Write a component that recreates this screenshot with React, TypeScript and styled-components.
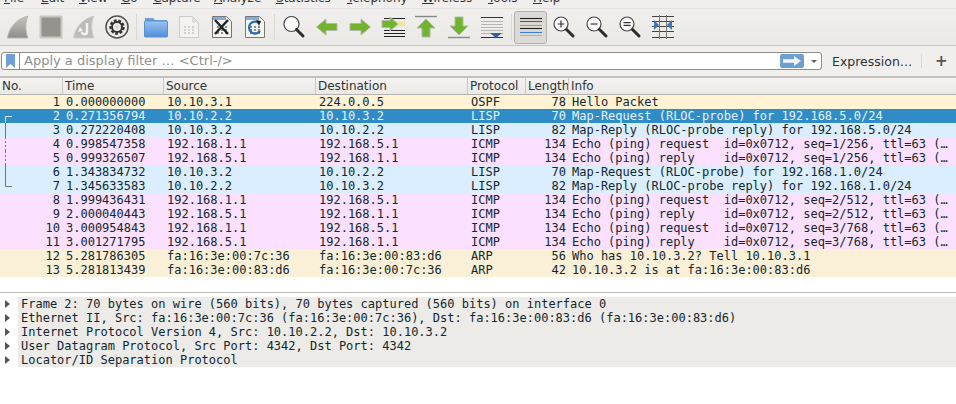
import React from "react";
import styled, { createGlobalStyle } from "styled-components";

const Global = createGlobalStyle`
  html, body { margin: 0; padding: 0; background: #fff; }
  body { width: 956px; height: 404px; overflow: hidden; font-family: "DejaVu Sans", sans-serif; }
`;
const Page = styled.div`display:flex;flex-direction:column;width:956px;height:404px;overflow:hidden;background:#fff;`;
const MenuBar = styled.div`display:flex;height:8px;background:#f1efed;overflow:hidden;padding-left:4px;border-bottom:0;`;
const MenuItem = styled.div<{ $w: number }>`width:${p => p.$w}px;margin-top:-10px;line-height:17px;font-size:12px;color:#2e3436;white-space:pre;
  u{text-decoration:underline;text-underline-offset:1px;}`;
const Toolbar = styled.div`display:flex;align-items:center;height:38px;padding-left:1px;background:linear-gradient(#f1efed,#ebe9e6);border-top:1px solid #e4e2df;border-bottom:1px solid #c9c6c1;box-sizing:border-box;`;
const ToolBtn = styled.div<{ $on?: boolean }>`width:33px;height:33px;display:flex;align-items:center;justify-content:center;flex:none;box-sizing:border-box;
  ${p => p.$on ? "background:#dcdad6;border:1px solid #b4b1ac;border-radius:3px;margin:0;" : ""}`;
const ToolSep = styled.div`width:6px;flex:none;display:flex;justify-content:center;&::after{content:"";width:1px;height:26px;background:#dcd9d5;}`;
const FilterBar = styled.div`display:flex;align-items:center;height:32px;box-sizing:border-box;padding:0 8px 0 1px;background:#f1efed;border-bottom:2px solid #c4c1bc;`;
const FilterBox = styled.div`display:flex;align-items:center;width:821px;height:18px;box-sizing:border-box;background:#fff;border:1px solid #8f8b86;border-radius:3px;`;
const Bookmark = styled.div`width:18px;height:16px;flex:none;display:flex;align-items:center;justify-content:center;border-right:1px solid #8f8b86;box-sizing:border-box;`;
const FilterInput = styled.div`flex:1;padding-left:4px;font-size:13px;line-height:16px;color:#8c9092;white-space:pre;`;
const ApplyBtn = styled.div`width:24px;height:14px;border-radius:2px;background:#6e9fd2;display:flex;align-items:center;justify-content:center;flex:none;`;
const Caret = styled.div`width:0;height:0;margin:0 4px 0 7px;border-left:3px solid transparent;border-right:3px solid transparent;border-top:3px solid #5c5e5e;flex:none;`;
const ExprBtn = styled.div`margin-left:10px;width:88px;font-size:12.5px;color:#2e3436;white-space:pre;`;
const ExprSep = styled.div`width:1px;height:14px;background:#dcd9d5;margin-left:1px;`;
const PlusBtn = styled.div`margin-left:13px;font-size:15px;font-weight:bold;color:#555;line-height:16px;`;
const Cols = "63px 101px 152px 152px 58px 43px 1fr";
const Header = styled.div`display:grid;grid-template-columns:${Cols};height:17px;box-sizing:border-box;background:linear-gradient(#f5f3f1,#ebe9e6);border-bottom:1px solid #b5b2ad;`;
const HeadCell = styled.div`font-size:12px;line-height:16px;color:#2e3436;padding-left:2px;border-right:1px solid #cdcac5;white-space:pre;overflow:hidden;box-sizing:border-box;&:last-child{border-right:0;}`;
const Rows = styled.div`display:flex;flex-direction:column;height:198px;flex:none;`;
const Row = styled.div<{ $bg: string; $sel?: boolean }>`display:grid;grid-template-columns:${Cols};height:14px;flex:none;background:${p => p.$bg};color:${p => p.$sel ? "#e6f2fb" : "#12272e"};
  font-family:"DejaVu Sans Mono",monospace;font-size:12px;line-height:14px;`;
const Cell = styled.div<{ $right?: boolean }>`padding:0 ${p => p.$right ? "3px" : "0"} 0 ${p => p.$right ? "0" : "3px"};text-align:${p => p.$right ? "right" : "left"};white-space:pre;overflow:hidden;position:relative;`;
const Mark = styled.svg`position:absolute;left:0;top:0;`;
const Splitter = styled.div`height:5px;flex:none;background:#fff;border-top:1px solid #bdbab6;border-bottom:0;margin-top:-1px;box-sizing:content-box;`;
const Details = styled.div`display:flex;flex-direction:column;margin-top:-1px;`;
const DetailRow = styled.div`display:flex;height:14px;font-family:"DejaVu Sans Mono",monospace;font-size:12px;line-height:14px;color:#12272e;white-space:pre;`;
const Arrow = styled.div`width:18px;flex:none;display:flex;align-items:center;padding-left:5px;box-sizing:border-box;
  &::before{content:"";border-left:5px solid #555;border-top:4px solid transparent;border-bottom:4px solid transparent;}`;
const DetailText = styled.div`flex:1;background:#ecebe8;padding-left:3px;`;

const g = "#3f3f3f";
const Fin = ({ c = "#8f8c87" }: { c?: string }) => (
  <svg width="24" height="26" viewBox="0 0 24 26"><defs><linearGradient id="fin" x1="0" x2="0" y1="0" y2="1"><stop offset="0" stopColor="#c8c6c2" /><stop offset="1" stopColor={c} /></linearGradient></defs>
    <path d="M1.5 24C3 14 10 5 22 2c-3 6-3 15 0 22z" fill="url(#fin)" stroke="#b8b6b1" /></svg>
);
const Stop = () => <svg width="24" height="24" viewBox="0 0 24 24"><rect x="1.5" y="1.5" width="21" height="21" fill="#96938d" stroke="#c9c7c3" strokeWidth="2" /></svg>;
const Restart = () => (
  <svg width="24" height="26" viewBox="0 0 24 26"><path d="M1.5 24C3 14 10 5 22 2c-3 6-3 15 0 22z" fill="#bdbbb6" stroke="#cfcdc9" />
    <path d="M15 9v9c0 3-5 3-5 0" fill="none" stroke="#f2f1ef" strokeWidth="2.4" /><path d="M8 13l-2 5 5-1z" fill="#f2f1ef" /></svg>
);
const Gear = () => (
  <svg width="24" height="24" viewBox="0 0 24 24"><circle cx="12" cy="12" r="11" fill="#f2f1ef" stroke="#555" strokeWidth="1.6" /><circle cx="12" cy="12" r="6.6" fill="none" stroke="#333" strokeWidth="2.2" strokeDasharray="3 1.6" /><circle cx="12" cy="12" r="5" fill="none" stroke="#333" strokeWidth="2" /><circle cx="12" cy="12" r="2.4" fill="#ddd" /></svg>
);
const Folder = () => (
  <svg width="24" height="22" viewBox="0 0 24 22"><defs><linearGradient id="fo" x1="0" x2="0" y1="0" y2="1"><stop offset="0" stopColor="#9cc3ef" /><stop offset="1" stopColor="#4d8fdc" /></linearGradient></defs>
    <path d="M1 2h8l2 2h12v3H1z" fill="#6d9fd8" /><rect x="0.5" y="5" width="23" height="16" rx="1" fill="url(#fo)" stroke="#5a8fca" /></svg>
);
const Doc = ({ dim }: { dim?: boolean }) => (
  <>{[0, 1, 2].map(r => <path key={r} d={`M6 ${12 + r * 3}h2M10 ${12 + r * 3}h2M14 ${12 + r * 3}h2`} stroke={dim ? "#c7c5c0" : "#66707a"} strokeWidth="1.4" />)}</>
);
const FileIcon = () => (
  <svg width="22" height="24" viewBox="0 0 22 24"><path d="M1.5 1.5h13l6 6v15h-19z" fill="#f3f2ef" stroke="#cdcbc6" /><path d="M14 1.5v6h6z" fill="#dedcd8" /><Doc dim /></svg>
);
const CloseFile = () => (
  <svg width="22" height="24" viewBox="0 0 22 24"><path d="M1.5 1.5h14l5 5v16h-19z" fill="#f4f4f0" stroke="#777" /><path d="M2 2h13v3H2z" fill="#7fb0e0" /><Doc /><path d="M4 5l13 14M17 5L4 19" stroke="#222" strokeWidth="2.4" /></svg>
);
const Reload = () => (
  <svg width="22" height="24" viewBox="0 0 22 24"><path d="M1.5 1.5h14l5 5v16h-19z" fill="#f4f4f0" stroke="#777" /><path d="M2 2h13v3H2z" fill="#7fb0e0" /><Doc /><path d="M15 8a6 6 0 1 0 1 8" fill="none" stroke="#2b6cb0" strokeWidth="2.2" /><path d="M12 5l5 1-2 5z" fill="#222" /></svg>
);
const Lens = ({ sign, big }: { sign?: string; big?: boolean }) => (
  <svg width="24" height="24" viewBox="0 0 24 24">
    <circle cx={big ? 9.5 : 9} cy={big ? 9 : 9} r={big ? 7.5 : 7} fill="#fff" stroke="#444" strokeWidth="1.2" />
    <path d="M14.5 14.5L21 21" stroke="#2c2c2c" strokeWidth="3" strokeLinecap="round" />
    {sign === "+" && <path d="M5.5 9h7M9 5.5v7" stroke="#333" strokeWidth="1.2" />}
    {sign === "-" && <path d="M5.5 9h7" stroke="#333" strokeWidth="1.2" />}
    {sign === "=" && <path d="M5.5 7.7h7M5.5 10.3h7" stroke="#333" strokeWidth="1.2" />}
  </svg>
);
const green = "#6fb52c", gs = "#b5b8ae";
const ArrowLeft = () => <svg width="24" height="20" viewBox="0 0 24 20"><path d="M1.5 10L11 2v4.5h11v7H11V18z" fill={green} stroke={gs} /></svg>;
const ArrowRight = () => <svg width="24" height="20" viewBox="0 0 24 20"><path d="M22.5 10L13 2v4.5H2v7h11V18z" fill={green} stroke={gs} /></svg>;
const GoTo = () => (
  <svg width="24" height="24" viewBox="0 0 24 24"><path d="M3 3.5h21M3 15.5h21M3 18.5h21M3 21.5h21" stroke="#222" strokeWidth="1.1" /><path d="M13 6.5h11v5H13z" fill="#e8e8a0" /><path d="M17 9L9 2v3.5H1v7h8V16z" fill={green} stroke={gs} /></svg>
);
const GoTop = () => (
  <svg width="22" height="24" viewBox="0 0 22 24"><path d="M0 1.5h22" stroke="#888" strokeWidth="1.4" /><path d="M11 4L2 13h5v9h8v-9h5z" fill={green} stroke={gs} /></svg>
);
const GoBottom = () => (
  <svg width="22" height="24" viewBox="0 0 22 24"><path d="M0 22.5h22" stroke="#888" strokeWidth="1.4" /><path d="M11 20L2 11h5V2h8v9h5z" fill={green} stroke={gs} /></svg>
);
const AutoScroll = () => (
  <svg width="24" height="24" viewBox="0 0 24 24"><path d="M1 2.5h22M1 22.5h22" stroke="#333" strokeWidth="1.1" /><path d="M1 6.5h22M1 9.5h22M1 12.5h22M1 15.5h22M1 18.5h22" stroke="#b5b5b2" strokeWidth="1" /><path d="M10 18h12l-6 5z" fill="#2f5fa8" /></svg>
);
const Colorize = () => (
  <svg width="24" height="24" viewBox="0 0 24 24"><path d="M1 3.5h22" stroke="#222" strokeWidth="1.1" /><path d="M1 6.5h22" stroke="#c4312c" strokeWidth="1.1" /><path d="M1 10.5h22" stroke="#7cc041" strokeWidth="1.1" /><path d="M1 13.5h22" stroke="#222" strokeWidth="1.1" /><path d="M1 17.5h22" stroke="#3b7fd0" strokeWidth="1.1" /><path d="M1 20.5h22" stroke="#d9b43a" strokeWidth="1.1" /></svg>
);
const Resize = () => (
  <svg width="22" height="24" viewBox="0 0 22 24"><path d="M0 1.5h22M0 6.5h22M0 11.5h22M0 16.5h22M0 22.5h22" stroke="#444" strokeWidth="1" /><path d="M7.5 0v24M14.5 0v24" stroke="#777" strokeWidth="1" /><path d="M2 5l5 5-5 5zM20 5l-5 5 5 5z" fill="#3f78b8" /></svg>
);

const tools: (React.ReactNode | null)[] = [
  <Fin />, <Stop />, <Restart />, <Gear />, null,
  <Folder />, <FileIcon />, <CloseFile />, <Reload />, null,
  <Lens big />, <ArrowLeft />, <ArrowRight />, <GoTo />, <GoTop />, <GoBottom />, <AutoScroll />, null,
  "on", <Lens sign="+" />, <Lens sign="-" />, <Lens sign="=" />, <Resize />,
];

const menu: [string, string, number][] = [
  ["F", "ile", 37], ["E", "dit", 38], ["V", "iew", 42], ["G", "o", 32], ["C", "apture", 61], ["A", "nalyze", 62],
  ["S", "tatistics", 71], ["T", "elephony", 75], ["W", "ireless", 66], ["T", "ools", 45], ["H", "elp", 40],
];

const C = { o: "#fff3d6", l: "#daeeff", i: "#fce0ff", a: "#faf0d7", s: "#308cc6" };
const rows: [string, string, string, string, string, string, string, string][] = [
  ["1", "0.000000000", "10.10.3.1", "224.0.0.5", "OSPF", "78", "Hello Packet", C.o],
  ["2", "0.271356794", "10.10.2.2", "10.10.3.2", "LISP", "70", "Map-Request (RLOC-probe) for 192.168.5.0/24", C.s],
  ["3", "0.272220408", "10.10.3.2", "10.10.2.2", "LISP", "82", "Map-Reply (RLOC-probe reply) for 192.168.5.0/24", C.l],
  ["4", "0.998547358", "192.168.1.1", "192.168.5.1", "ICMP", "134", "Echo (ping) request  id=0x0712, seq=1/256, ttl=63 (…", C.i],
  ["5", "0.999326507", "192.168.5.1", "192.168.1.1", "ICMP", "134", "Echo (ping) reply    id=0x0712, seq=1/256, ttl=63 (…", C.i],
  ["6", "1.343834732", "10.10.3.2", "10.10.2.2", "LISP", "70", "Map-Request (RLOC-probe) for 192.168.1.0/24", C.l],
  ["7", "1.345633583", "10.10.2.2", "10.10.3.2", "LISP", "82", "Map-Reply (RLOC-probe reply) for 192.168.1.0/24", C.l],
  ["8", "1.999436431", "192.168.1.1", "192.168.5.1", "ICMP", "134", "Echo (ping) request  id=0x0712, seq=2/512, ttl=63 (…", C.i],
  ["9", "2.000040443", "192.168.5.1", "192.168.1.1", "ICMP", "134", "Echo (ping) reply    id=0x0712, seq=2/512, ttl=63 (…", C.i],
  ["10", "3.000954843", "192.168.1.1", "192.168.5.1", "ICMP", "134", "Echo (ping) request  id=0x0712, seq=3/768, ttl=63 (…", C.i],
  ["11", "3.001271795", "192.168.5.1", "192.168.1.1", "ICMP", "134", "Echo (ping) reply    id=0x0712, seq=3/768, ttl=63 (…", C.i],
  ["12", "5.281786305", "fa:16:3e:00:7c:36", "fa:16:3e:00:83:d6", "ARP", "56", "Who has 10.10.3.2? Tell 10.10.3.1", C.a],
  ["13", "5.281813439", "fa:16:3e:00:83:d6", "fa:16:3e:00:7c:36", "ARP", "42", "10.10.3.2 is at fa:16:3e:00:83:d6", C.a],
];

const marks: Record<string, React.ReactNode> = {
  "2": <path d="M12 7.5H5.5V14" fill="none" stroke="#d6e8f5" />,
  "3": <path d="M5.5 0V14" stroke="#6a7780" />,
  "4": <path d="M5.5 0V14" stroke="#8a6a90" strokeDasharray="2 2" />,
  "5": <path d="M5.5 0V14" stroke="#8a6a90" strokeDasharray="2 2" />,
  "6": <path d="M5.5 0V14" stroke="#6a7780" />,
  "7": <path d="M5.5 0V7.5H12" fill="none" stroke="#6a7780" />,
};

const details = [
  "Frame 2: 70 bytes on wire (560 bits), 70 bytes captured (560 bits) on interface 0",
  "Ethernet II, Src: fa:16:3e:00:7c:36 (fa:16:3e:00:7c:36), Dst: fa:16:3e:00:83:d6 (fa:16:3e:00:83:d6)",
  "Internet Protocol Version 4, Src: 10.10.2.2, Dst: 10.10.3.2",
  "User Datagram Protocol, Src Port: 4342, Dst Port: 4342",
  "Locator/ID Separation Protocol",
];

export default function App() {
  return (
    <Page>
      <Global />
      <MenuBar>
        {menu.map(([a, b, w], i) => <MenuItem key={i} $w={w}><u>{a}</u>{b}</MenuItem>)}
      </MenuBar>
      <Toolbar>
        {tools.map((t, i) =>
          t === null ? <ToolSep key={i} /> :
          t === "on" ? <ToolBtn key={i} $on><Colorize /></ToolBtn> :
          <ToolBtn key={i}>{t}</ToolBtn>)}
      </Toolbar>
      <FilterBar>
        <FilterBox>
          <Bookmark>
            <svg width="9" height="14" viewBox="0 0 9 14"><path d="M0 0h9v14L4.5 10 0 14z" fill="#6f9fd8" /></svg>
          </Bookmark>
          <FilterInput>Apply a display filter … &lt;Ctrl-/&gt;</FilterInput>
          <ApplyBtn>
            <svg width="18" height="10" viewBox="0 0 18 10"><path d="M0 3.2h11V0l7 5-7 5V6.8H0z" fill="#f2f6fb" /></svg>
          </ApplyBtn>
          <Caret />
        </FilterBox>
        <ExprBtn>Expression…</ExprBtn>
        <ExprSep />
        <PlusBtn>+</PlusBtn>
      </FilterBar>
      <Header>
        {["No.", "Time", "Source", "Destination", "Protocol", "Length", "Info"].map(h => <HeadCell key={h}>{h}</HeadCell>)}
      </Header>
      <Rows>
        {rows.map(r => (
          <Row key={r[0]} $bg={r[7]} $sel={r[0] === "2"}>
            <Cell $right>
              {marks[r[0]] && <Mark width="14" height="14">{marks[r[0]]}</Mark>}
              {r[0]}
            </Cell>
            <Cell>{r[1]}</Cell>
            <Cell>{r[2]}</Cell>
            <Cell>{r[3]}</Cell>
            <Cell>{r[4]}</Cell>
            <Cell $right>{r[5]}</Cell>
            <Cell>{r[6]}</Cell>
          </Row>
        ))}
      </Rows>
      <Splitter />
      <Details>
        {details.map(d => <DetailRow key={d}><Arrow /><DetailText>{d}</DetailText></DetailRow>)}
      </Details>
    </Page>
  );
}
